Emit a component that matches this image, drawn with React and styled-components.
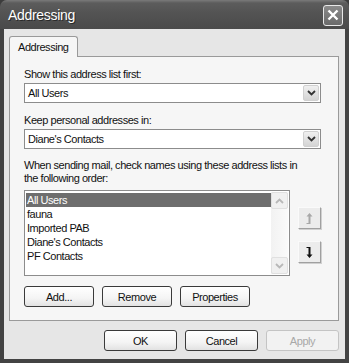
import * as React from "react";
import styled, { createGlobalStyle } from "styled-components";

const GlobalStyle = createGlobalStyle`
  html, body {
    margin: 0;
    padding: 0;
    background: #3c3c3c;
  }
  * {
    box-sizing: border-box;
  }
`;

const font = `"Liberation Sans", Arial, sans-serif`;

const Window = styled.div`
  width: 349px;
  height: 363px;
  display: flex;
  flex-direction: column;
  background: #434343;
  border-radius: 7px 7px 0 0;
  overflow: hidden;
  font-family: ${font};
  font-size: 11px;
  letter-spacing: -0.45px;
  color: #111;
`;

const TitleBar = styled.div`
  height: 29px;
  flex: none;
  display: flex;
  align-items: center;
  justify-content: space-between;
  padding: 1px 6px 0 8px;
  background: linear-gradient(#7a7a7a 0px, #5c5c5c 3px, #545454 12px, #4a4a4a 29px);
`;

const Title = styled.div`
  color: #fff;
  font-size: 14px;
  letter-spacing: -0.3px;
  text-shadow: 1px 1px 0 #2a2a2a;
`;

const CloseButton = styled.div`
  width: 20px;
  height: 21px;
  border: 1px solid #e8e8e8;
  border-radius: 3px;
  background: linear-gradient(#8a8a8a, #6a6a6a);
  display: flex;
  align-items: center;
  justify-content: center;
`;

const Body = styled.div`
  flex: 1;
  margin: 0 4px 4px 4px;
  background: #e6e6e6;
  display: flex;
  flex-direction: column;
  padding: 7px 6px 0 5px;
`;

const TabStrip = styled.div`
  display: flex;
  height: 20px;
`;

const Tab = styled.div`
  width: 69px;
  height: 21px;
  border: 1px solid #9a9a9a;
  border-bottom: none;
  border-radius: 3px 3px 0 0;
  background: #f6f6f6;
  padding: 4px 0 0 8px;
  position: relative;
  z-index: 1;
`;

const Panel = styled.div`
  width: 330px;
  height: 265px;
  border: 1px solid #9a9a9a;
  background: #f6f6f6;
  padding: 10px 17px 0 14px;
  display: flex;
  flex-direction: column;
`;

const Label = styled.div`
  line-height: 14px;
  margin-top: ${(p) => p.$top || 0}px;
`;

const WrapLabel = styled.div`
  line-height: 13px;
  margin-top: 10px;
  white-space: nowrap;
`;

const Select = styled.div`
  margin-top: 2px;
  height: 20px;
  border: 1px solid #8c8c8c;
  background: #fff;
  display: flex;
  align-items: center;
  justify-content: space-between;
  padding: 0 1px 0 3px;
`;

const DropButton = styled.div`
  width: 16px;
  height: 16px;
  border: 1px solid #d0d0d0;
  border-radius: 2px;
  background: linear-gradient(#f0f0f0, #d4d4d4);
  display: flex;
  align-items: center;
  justify-content: center;
`;

const ListRow = styled.div`
  display: flex;
  margin-top: 5px;
  gap: 8px;
`;

const ListBox = styled.div`
  width: 273px;
  height: 86px;
  border: 1px solid #8c8c8c;
  background: #fff;
  display: flex;
  padding: 1px;
`;

const Items = styled.div`
  flex: 1;
  padding-top: 1px;
`;

const Item = styled.div`
  height: 14px;
  line-height: 14px;
  padding-left: 1px;
  background: ${(p) => (p.$selected ? "#6e6e6e" : "transparent")};
  color: ${(p) => (p.$selected ? "#fff" : "#111")};
`;

const ScrollBar = styled.div`
  width: 17px;
  display: flex;
  flex-direction: column;
  justify-content: space-between;
  background: linear-gradient(90deg, #f2f2f2, #fafafa);
`;

const ScrollArrow = styled.div`
  height: 17px;
  border: 1px solid #e0e0e0;
  border-radius: 2px;
  background: #f0f0f0;
  display: flex;
  align-items: center;
  justify-content: center;
`;

const MoveColumn = styled.div`
  display: flex;
  flex-direction: column;
  gap: 12px;
  padding-top: 17px;
`;

const MoveButton = styled.div`
  width: 23px;
  height: 22px;
  background: #ececec;
  border: 1px solid #fafafa;
  border-right-color: #a0a0a0;
  border-bottom-color: #a0a0a0;
  box-shadow: 1px 1px 0 #d0d0d0;
  display: flex;
  align-items: center;
  justify-content: center;
`;

const ButtonRow = styled.div`
  display: flex;
  gap: 8px;
  margin-top: ${(p) => p.$top || 0}px;
  justify-content: ${(p) => p.$align || "flex-start"};
`;

const Button = styled.div`
  width: ${(p) => p.$w || 70}px;
  height: 21px;
  border: 1px solid ${(p) => (p.$disabled ? "#c4c4c4" : "#3a3a3a")};
  border-radius: 3px;
  background: ${(p) =>
    p.$disabled ? "#f2f2f2" : "linear-gradient(#ffffff, #f4f4f4 60%, #e2e2e2)"};
  color: ${(p) => (p.$disabled ? "#a8a8a8" : "#111")};
  display: flex;
  align-items: center;
  justify-content: center;
`;

const Chevron = ({ up, color = "#333" }) => (
  <svg width="9" height="6" viewBox="0 0 9 6">
    <path
      d={up ? "M1 5 L4.5 1.5 L8 5" : "M1 1 L4.5 4.5 L8 1"}
      fill="none"
      stroke={color}
      strokeWidth="1.8"
    />
  </svg>
);

const MoveIcon = ({ up, color }) => (
  <svg width="7" height="11" viewBox="0 0 7 11">
    {up ? (
      <path d="M3.5 0 L0.5 3.5 H2.5 V10 H0.5 V11 H4.5 V3.5 H6.5 Z" fill={color} />
    ) : (
      <path d="M3.5 11 L0.5 7.5 H2.5 V1 H0.5 V0 H4.5 V7.5 H6.5 Z" fill={color} />
    )}
  </svg>
);

const items = ["All Users", "fauna", "Imported PAB", "Diane's Contacts", "PF Contacts"];

export default function App() {
  return (
    <>
      <GlobalStyle />
      <Window>
        <TitleBar>
          <Title>Addressing</Title>
          <CloseButton>
            <svg width="12" height="12" viewBox="0 0 12 12">
              <path d="M1.5 1.5 L10.5 10.5 M10.5 1.5 L1.5 10.5" stroke="#fff" strokeWidth="2.4" />
            </svg>
          </CloseButton>
        </TitleBar>
        <Body>
          <TabStrip>
            <Tab>Addressing</Tab>
          </TabStrip>
          <Panel>
            <Label>Show this address list first:</Label>
            <Select>
              <span>All Users</span>
              <DropButton>
                <Chevron />
              </DropButton>
            </Select>
            <Label $top={10}>Keep personal addresses in:</Label>
            <Select>
              <span>Diane's Contacts</span>
              <DropButton>
                <Chevron />
              </DropButton>
            </Select>
            <WrapLabel>
              When sending mail, check names using these address lists in
              <br />
              the following order:
            </WrapLabel>
            <ListRow>
              <ListBox>
                <Items>
                  {items.map((it, i) => (
                    <Item key={it} $selected={i === 0}>
                      {it}
                    </Item>
                  ))}
                </Items>
                <ScrollBar>
                  <ScrollArrow>
                    <Chevron up color="#b8b8b8" />
                  </ScrollArrow>
                  <ScrollArrow>
                    <Chevron color="#b8b8b8" />
                  </ScrollArrow>
                </ScrollBar>
              </ListBox>
              <MoveColumn>
                <MoveButton>
                  <MoveIcon up color="#a8a8a8" />
                </MoveButton>
                <MoveButton>
                  <MoveIcon color="#111" />
                </MoveButton>
              </MoveColumn>
            </ListRow>
            <ButtonRow $top={10}>
              <Button>Add...</Button>
              <Button>Remove</Button>
              <Button>Properties</Button>
            </ButtonRow>
          </Panel>
          <ButtonRow $top={9} $align="flex-end">
            <Button $w={73}>OK</Button>
            <Button $w={73}>Cancel</Button>
            <Button $w={73} $disabled>
              Apply
            </Button>
          </ButtonRow>
        </Body>
      </Window>
    </>
  );
}
